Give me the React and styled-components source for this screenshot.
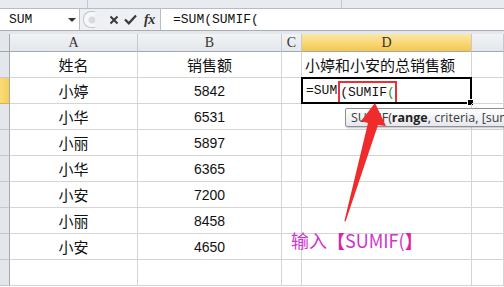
import React from "react";
import styled, { createGlobalStyle } from "styled-components";

const Global = createGlobalStyle`
  html, body { margin: 0; padding: 0; background: #fff; overflow: hidden; }
  #root { width: 504px; height: 287px; overflow: hidden; }
`;

const Page = styled.div`
  position: relative;
  width: 504px;
  height: 287px;
  overflow: hidden;
  display: flex;
  flex-direction: column;
  background: #fff;
  font-family: "Liberation Sans", "Noto Sans CJK SC", sans-serif;
`;

const TopStrip = styled.div`
  flex: none;
  height: 8px;
  display: grid;
  grid-template-columns: 88px 254px 1fr;
  background: #e8ebef;
  border-bottom: 1px solid #b7bcc4;
`;

const StripSeg = styled.div`
  border-right: ${(p) => (p.$last ? "none" : "1px solid #c3c8cf")};
`;

const FormulaBar = styled.div`
  flex: none;
  height: 21px;
  display: grid;
  grid-template-columns: 80px 80px 1fr;
  background: #eef0f3;
  border-bottom: 1px solid #a9aeb6;
`;

const NameBox = styled.div`
  display: flex;
  align-items: center;
  justify-content: space-between;
  padding: 0 3px 0 9px;
  background: #fff;
  border-right: 1px solid #b9bec5;
  font-family: "Liberation Mono", monospace;
  font-size: 13px;
  color: #111;
`;

const DropArrow = styled.span`
  width: 0;
  height: 0;
  border-left: 4px solid transparent;
  border-right: 4px solid transparent;
  border-top: 4px solid #333;
`;

const Controls = styled.div`
  display: flex;
  align-items: center;
  padding-left: 3px;
`;

const Splitter = styled.span`
  width: 12px;
  height: 17px;
  box-sizing: border-box;
  border-radius: 8px 0 0 8px;
  border: 1px solid #c2c6cc;
  border-right: none;
  background: radial-gradient(circle at 8px 8px, #d7dadf 0 3px, #f6f7f9 4px);
  margin-right: 11px;
`;

const CtrlIcon = styled.span`
  display: inline-flex;
  align-items: center;
  justify-content: center;
  width: ${(p) => p.$w}px;
  height: 18px;
`;

const Fx = styled.span`
  font-family: "Liberation Serif", serif;
  font-style: italic;
  font-weight: bold;
  font-size: 14px;
  color: #333;
  margin-left: 6px;
  letter-spacing: -0.5px;
`;

const FormulaInput = styled.div`
  display: flex;
  align-items: center;
  padding-left: 12px;
  background: #fff;
  border-left: 1px solid #b9bec5;
  font-family: "Liberation Mono", monospace;
  font-size: 13px;
  color: #111;
  white-space: pre;
`;

const Gap = styled.div`
  flex: none;
  height: 3px;
  background: #e4e7eb;
`;

const Sheet = styled.div`
  position: relative;
  flex: 1;
`;

const Grid = styled.div`
  display: grid;
  grid-template-columns: 10px 128px 144px 20px 170px 1fr;
  grid-template-rows: 18px repeat(9, 26px);
`;

const Corner = styled.div`
  background: #e3e6ea;
  border-right: 1px solid #a3a9b1;
  border-bottom: 1px solid #a3a9b1;
  box-sizing: border-box;
`;

const ColHead = styled.div`
  box-sizing: border-box;
  display: flex;
  align-items: center;
  justify-content: center;
  border-right: 1px solid #c5cad1;
  border-bottom: 1px solid #a3a9b1;
  background: ${(p) =>
    p.$active
      ? "linear-gradient(#fbe7a8, #f8d774 55%, #f4c64f)"
      : "linear-gradient(#f1f3f5, #e4e7eb)"};
  font-family: "Liberation Serif", serif;
  font-size: 14px;
  color: #333;
`;

const RowHead = styled.div`
  box-sizing: border-box;
  border-right: 1px solid #a3a9b1;
  border-bottom: 1px solid ${(p) => (p.$active ? "#e0b040" : "#c3c8cf")};
  background: ${(p) => (p.$active ? "linear-gradient(90deg,#fbdc7a,#f7cd55)" : "#e3e6ea")};
`;

const Cell = styled.div`
  position: relative;
  box-sizing: border-box;
  display: flex;
  align-items: center;
  justify-content: ${(p) => (p.$left ? "flex-start" : "center")};
  padding-left: ${(p) => (p.$left ? "3px" : "0")};
  border-right: 1px solid #d4d4d4;
  border-bottom: 1px solid #d4d4d4;
  font-size: ${(p) => (p.$cjk ? "15px" : "14px")};
  font-family: ${(p) =>
    p.$cjk
      ? '"Noto Sans CJK SC", sans-serif'
      : '"Liberation Sans", "Noto Sans CJK SC", sans-serif'};
  color: #111;
  white-space: nowrap;
`;

const ActiveFrame = styled.div`
  position: absolute;
  left: -1px;
  top: -1px;
  right: -1px;
  bottom: -1px;
  border: 2px solid #000;
  pointer-events: none;
`;

const FillHandle = styled.div`
  position: absolute;
  right: -4px;
  bottom: -4px;
  width: 5px;
  height: 5px;
  background: #000;
  border: 1px solid #fff;
`;

const FormulaText = styled.span`
  display: flex;
  align-items: center;
  font-family: "Liberation Mono", monospace;
  font-size: 13px;
  color: #111;
  white-space: pre;
  padding-left: 1px;
`;

const RedBox = styled.span`
  display: inline-flex;
  align-items: center;
  height: 23px;
  margin-top: 3px;
  margin-left: 1px;
  box-sizing: border-box;
  border: 2px solid #ec2f33;
  padding: 0;
`;

const Green = styled.span`
  color: #159a2c;
`;

const Tooltip = styled.div`
  position: absolute;
  left: 345px;
  top: 74px;
  width: 200px;
  height: 19px;
  box-sizing: border-box;
  padding-left: 5px;
  display: flex;
  align-items: center;
  border: 1px solid #8d9096;
  border-radius: 2px;
  background: linear-gradient(#ffffff, #e6e8ee);
  box-shadow: 1px 1px 2px rgba(0, 0, 0, 0.25);
  font-family: "Open Sans", "Liberation Sans", sans-serif;
  font-size: 12.5px;
  color: #3b3b3b;
  white-space: pre;
  b { font-weight: 700; color: #222; }
`;

const ArrowSvg = styled.svg`
  position: absolute;
  left: 335px;
  top: 66px;
  overflow: visible;
`;

const Note = styled.div`
  position: absolute;
  left: 291px;
  top: 195px;
  font-family: "Noto Sans CJK SC", sans-serif;
  font-size: 18px;
  line-height: 22px;
  color: #cf35cf;
  white-space: pre;
`;

const Bracket = styled.span`
  color: #e0249e;
  font-weight: 700;
`;

const rows = [
  ["姓名", "销售额", "", "小婷和小安的总销售额"],
  ["小婷", "5842", "", "F"],
  ["小华", "6531"],
  ["小丽", "5897"],
  ["小华", "6365"],
  ["小安", "7200"],
  ["小丽", "8458"],
  ["小安", "4650"],
  ["", ""],
];

const cols = ["A", "B", "C", "D", ""];

export default function App() {
  return (
    <Page>
      <Global />
      <TopStrip>
        <StripSeg />
        <StripSeg />
        <StripSeg $last />
      </TopStrip>
      <FormulaBar>
        <NameBox>
          <span>SUM</span>
          <DropArrow />
        </NameBox>
        <Controls>
          <Splitter />
          <CtrlIcon $w={16}>
            <svg width="10" height="10" viewBox="0 0 10 10">
              <path d="M1.5 1.5 L8.5 8.5 M8.5 1.5 L1.5 8.5" stroke="#3a3a3a" strokeWidth="2" />
            </svg>
          </CtrlIcon>
          <CtrlIcon $w={16}>
            <svg width="13" height="11" viewBox="0 0 13 11">
              <path d="M1 5.5 L4.8 9.3 L12 1.5" stroke="#3a3a3a" strokeWidth="2.2" fill="none" />
            </svg>
          </CtrlIcon>
          <Fx>fx</Fx>
        </Controls>
        <FormulaInput>=SUM(SUMIF(</FormulaInput>
      </FormulaBar>
      <Gap />
      <Sheet>
        <Grid>
          <Corner />
          {cols.map((c, i) => (
            <ColHead key={i} $active={c === "D"}>
              {c}
            </ColHead>
          ))}
          {rows.map((r, ri) => (
            <React.Fragment key={ri}>
              <RowHead $active={ri === 1} />
              <Cell $cjk>{r[0]}</Cell>
              <Cell $cjk={ri === 0}>{r[1]}</Cell>
              <Cell />
              {r[3] === "F" ? (
                <Cell $left>
                  <FormulaText>
                    =SUM
                    <RedBox>
                      (SUMIF<Green>(</Green>
                    </RedBox>
                  </FormulaText>
                  <ActiveFrame>
                    <FillHandle />
                  </ActiveFrame>
                </Cell>
              ) : (
                <Cell $left $cjk>
                  {r[3] || ""}
                </Cell>
              )}
              <Cell />
            </React.Fragment>
          ))}
        </Grid>
        <Tooltip>
          SUMIF(<b>range</b>, criteria, [sum_range])
        </Tooltip>
        <ArrowSvg width="55" height="124" viewBox="335 100 55 124">
          <polygon
            points="375,103 386,126 378,125 345.6,221.5 344.4,221 368,123 361,121"
            fill="#ef2b2b"
          />
        </ArrowSvg>
        <Note>
          输入<Bracket>【</Bracket>SUMIF(<Bracket>】</Bracket>
        </Note>
      </Sheet>
    </Page>
  );
}
